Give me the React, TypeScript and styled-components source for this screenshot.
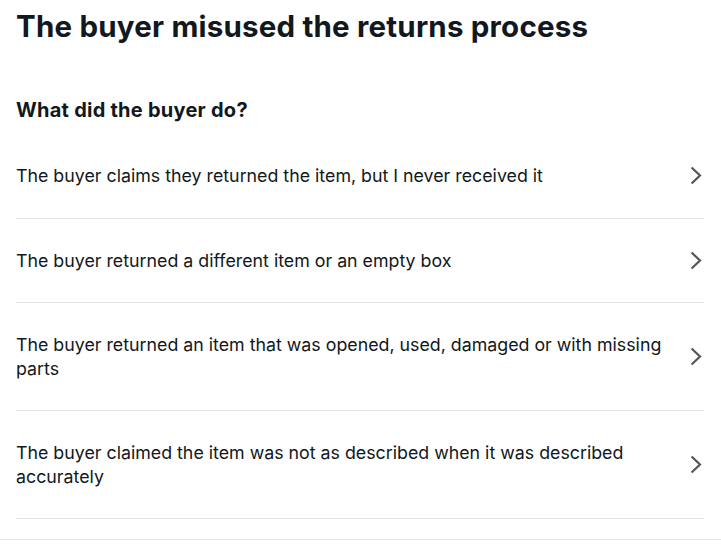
import React from "react";
import styled, { createGlobalStyle } from "styled-components";

const GlobalStyle = createGlobalStyle`
    body {
        margin: 0;
        background: #ffffff;
        font-family: Inter, "Liberation Sans", Arial, sans-serif;
        color: #111820;
    }
`;

const Page = styled.div`
    padding: 0 17px 0 16px;
    border-bottom: 1px solid #e5e5e5;
`;

const Title = styled.h1`
    margin: 0;
    padding-top: 8px;
    font-size: 29.5px;
    line-height: 36px;
    font-weight: 700;
    letter-spacing: 0.2px;
`;

const Subtitle = styled.h2`
    margin: 0;
    padding-top: 53px;
    font-size: 20px;
    line-height: 26px;
    font-weight: 700;
    letter-spacing: 0.25px;
`;

const List = styled.ul`
    list-style: none;
    margin: 11px 0 20px;
    padding: 0;
`;

const Row = styled.li`
    display: flex;
    align-items: center;
    justify-content: space-between;
    gap: 20px;
    padding: 30px 0;
    border-bottom: 1px solid #e5e5e5;
    cursor: pointer;
`;

const RowText = styled.span`
    font-size: 17.8px;
    line-height: 23.5px;
    max-width: 654px;
`;

const Chevron = styled.svg`
    flex: none;
    width: 12px;
    height: 19px;
    margin-right: 2px;
`;

const reasons = [
    "The buyer claims they returned the item, but I never received it",
    "The buyer returned a different item or an empty box",
    "The buyer returned an item that was opened, used, damaged or with missing parts",
    "The buyer claimed the item was not as described when it was described accurately",
];

const App: React.FC = () => {
    return (
        <>
            <GlobalStyle />
            <Page>
                <Title>The buyer misused the returns process</Title>
                <Subtitle>What did the buyer do?</Subtitle>
                <List>
                    {reasons.map((reason) => (
                        <Row key={reason}>
                            <RowText>{reason}</RowText>
                            <Chevron viewBox="0 0 12 19" aria-hidden="true">
                                <path d="M1.6 1.5 L10 9.5 L1.6 17.5" fill="none" stroke="#555" strokeWidth="2.2" />
                            </Chevron>
                        </Row>
                    ))}
                </List>
            </Page>
        </>
    );
};

export default App;
